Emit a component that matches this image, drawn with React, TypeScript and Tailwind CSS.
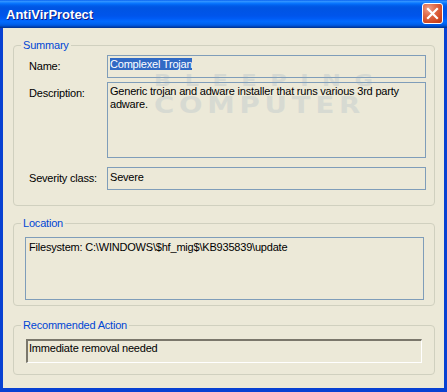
import React from 'react'

const ui = { fontFamily: '"Liberation Sans", Arial, sans-serif' }

function GroupBox({
  title,
  className,
  children,
}: { title: string; className: string; children: React.ReactNode }) {
  return (
    <div className={`relative border border-[#d0d0bf] rounded-[4px] ${className}`}>
      <span className="absolute -top-[7px] left-[7px] bg-[#ece9d8] px-[2px] text-[11px] leading-[13px] tracking-[-0.2px] text-[#0046d5]">
        {title}
      </span>
      {children}
    </div>
  )
}

function Field({ label, children }: { label: string; children: React.ReactNode }) {
  return (
    <div className="flex">
      <div className="w-[78px] shrink-0 pt-[5px] text-[11px] leading-[13px] tracking-[-0.2px] text-black">
        {label}
      </div>
      {children}
    </div>
  )
}

export default function App() {
  return (
    <div className="relative w-[447px] h-[392px] flex flex-col overflow-hidden select-none" style={ui}>
      {/* title bar */}
      <div className="relative h-[28px] shrink-0 flex items-center pl-[6px] bg-[linear-gradient(#0058ee_0%,#3593ff_4%,#288eff_7%,#127dff_10%,#036ffc_14%,#0262ee_18%,#0057e5_24%,#0054e3_30%,#0055eb_56%,#005bf5_66%,#026afe_76%,#0062ef_86%,#0052d6_92%,#0040ab_96%,#003092_100%)]">
        <span className="text-[13px] font-bold leading-[15px] text-white [text-shadow:1px_1px_0_#0a1883]">
          AntiVirProtect
        </span>
        <div className="absolute left-[422px] top-[3px] w-[21px] h-[21px] rounded-[3px] border border-white flex items-center justify-center bg-[radial-gradient(circle_at_30%_25%,#f0a08a_0%,#e06c4b_35%,#d0461f_75%,#b8381a_100%)]">
          <svg width="13" height="13" viewBox="0 0 13 13">
            <path d="M2 2 L11 11 M11 2 L2 11" stroke="#ffffff" strokeWidth="2.2" strokeLinecap="square" />
          </svg>
        </div>
      </div>

      {/* window body */}
      <div className="relative flex-1 flex flex-col bg-[#ece9d8] border-l-[3px] border-r-[3px] border-b-[4px] border-[#0841d2] pl-[10px] pr-[9px]">
        <GroupBox title="Summary" className="mt-[17px] h-[161px] pl-[15px] pt-[9px]">
          <div className="flex flex-col">
            <Field label="Name:">
              <div className="w-[319px] h-[23px] border border-[#7f9db9] pl-[2px] pt-[2px] text-[11px] leading-[13px] tracking-[-0.2px]">
                <span className="bg-[#316ac5] text-white">Complexel Trojan</span>
              </div>
            </Field>
            <div className="mt-[4px]">
              <Field label="Description:">
                <div className="w-[319px] h-[76px] border border-[#7f9db9] pl-[2px] pr-[4px] pt-[2px] text-[11px] leading-[13px] tracking-[-0.2px] text-black">
                  Generic trojan and adware installer that runs various 3rd party adware.
                </div>
              </Field>
            </div>
            <div className="mt-[9px]">
              <Field label="Severity class:">
                <div className="w-[319px] h-[23px] border border-[#7f9db9] pl-[2px] pt-[3px] text-[11px] leading-[13px] tracking-[-0.2px] text-black">
                  Severe
                </div>
              </Field>
            </div>
          </div>
        </GroupBox>

        <GroupBox title="Location" className="mt-[17px] h-[83px] pl-[11px] pt-[13px]">
          <div className="w-[399px] h-[63px] border border-[#7f9db9] pl-[3px] pt-[3px] text-[11px] leading-[13px] tracking-[-0.2px] text-black">
            Filesystem: C:\WINDOWS\$hf_mig$\KB935839\update
          </div>
        </GroupBox>

        <GroupBox title="Recommended Action" className="mt-[19px] h-[50px] pl-[12px] pt-[13px]">
          <div className="w-[396px] h-[24px] border-t-2 border-l-2 border-r border-b border-t-[#7a776b] border-l-[#7a776b] border-r-white border-b-white pl-[1px] pt-[1px] text-[11px] leading-[13px] tracking-[-0.2px] text-black">
            Immediate removal needed
          </div>
        </GroupBox>
      </div>

      {/* faint watermark over the dialog */}
      <div
        className="pointer-events-none absolute left-[154px] top-[74px] flex flex-col text-[#8ea6c0] opacity-[0.22]"
        style={{ fontFamily: '"DejaVu Sans", sans-serif' }}
      >
        <span className="origin-left scale-x-150 text-[15px] font-bold leading-[15px] tracking-[9px] whitespace-nowrap">BLEEPING</span>
        <span className="mt-[5px] origin-left scale-x-[1.2] text-[23px] font-bold leading-[23px] tracking-[4px] whitespace-nowrap">COMPUTER</span>
      </div>
    </div>
  )
}
